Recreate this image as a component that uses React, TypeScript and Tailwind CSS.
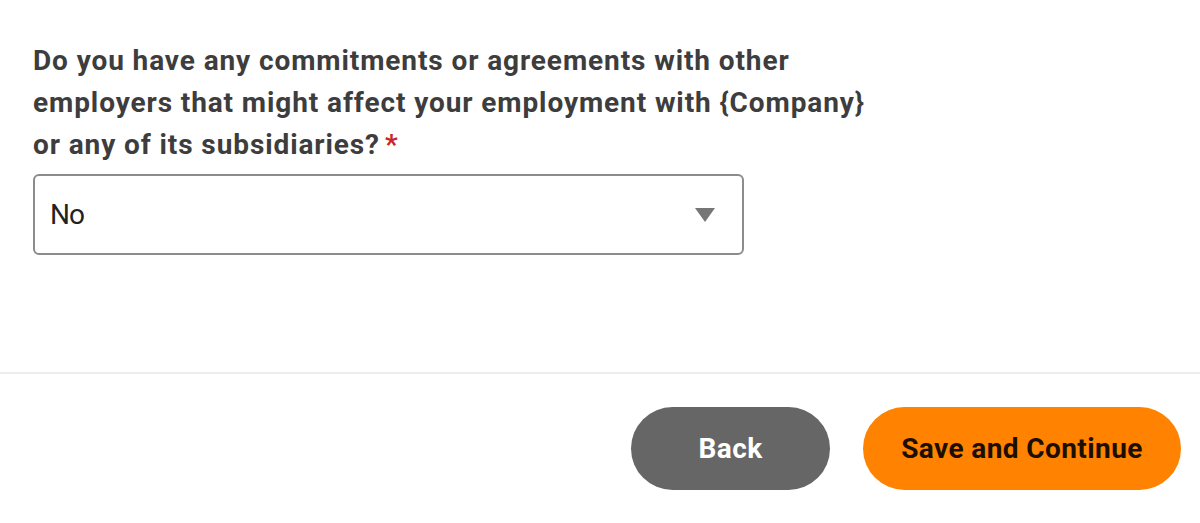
import React, { useState } from 'react';

export default function App() {
  const [answer, setAnswer] = useState('No');

  return (
    <div className="min-h-[523px] w-[1200px] bg-white font-['Roboto',sans-serif]">
      <div className="px-[33px] pt-[40px]">
        <label className="block w-[845px] text-[28px] font-bold leading-[42px] tracking-[0.9px] text-[#3d3d3d]">
          Do you have any commitments or agreements with other employers that might affect your employment with
          {' {Company} '}or any of its subsidiaries?
          <span className="ml-[5px] text-[#c62828]">*</span>
        </label>
        <div className="relative mt-[8px] h-[81px] w-[711px]">
          <select
            value={answer}
            onChange={(e) => setAnswer(e.target.value)}
            className="h-full w-full appearance-none rounded-[6px] border-2 border-[#8c8c8c] bg-white pl-[15px] text-[28px] tracking-[-1px] text-[#222] outline-none"
          >
            <option value="No">No</option>
            <option value="Yes">Yes</option>
          </select>
          <svg
            className="pointer-events-none absolute right-[29px] top-[34px]"
            width="20"
            height="14"
            viewBox="0 0 20 14"
          >
            <path d="M0 0 H20 L10 14 Z" fill="#767676" />
          </svg>
        </div>
      </div>

      <div className="mt-[117px] border-t-2 border-[#ececec]" />

      <div className="flex justify-end gap-[33px] pr-[19px] pt-[33px]">
        <button
          type="button"
          className="h-[83px] w-[199px] rounded-full bg-[#666666] text-[28px] font-bold tracking-[0.4px] text-white"
        >
          Back
        </button>
        <button
          type="button"
          className="h-[83px] w-[318px] rounded-full bg-[#ff8200] text-[28px] font-bold tracking-[0.4px] text-[#1a0f00]"
        >
          Save and Continue
        </button>
      </div>
    </div>
  );
}
